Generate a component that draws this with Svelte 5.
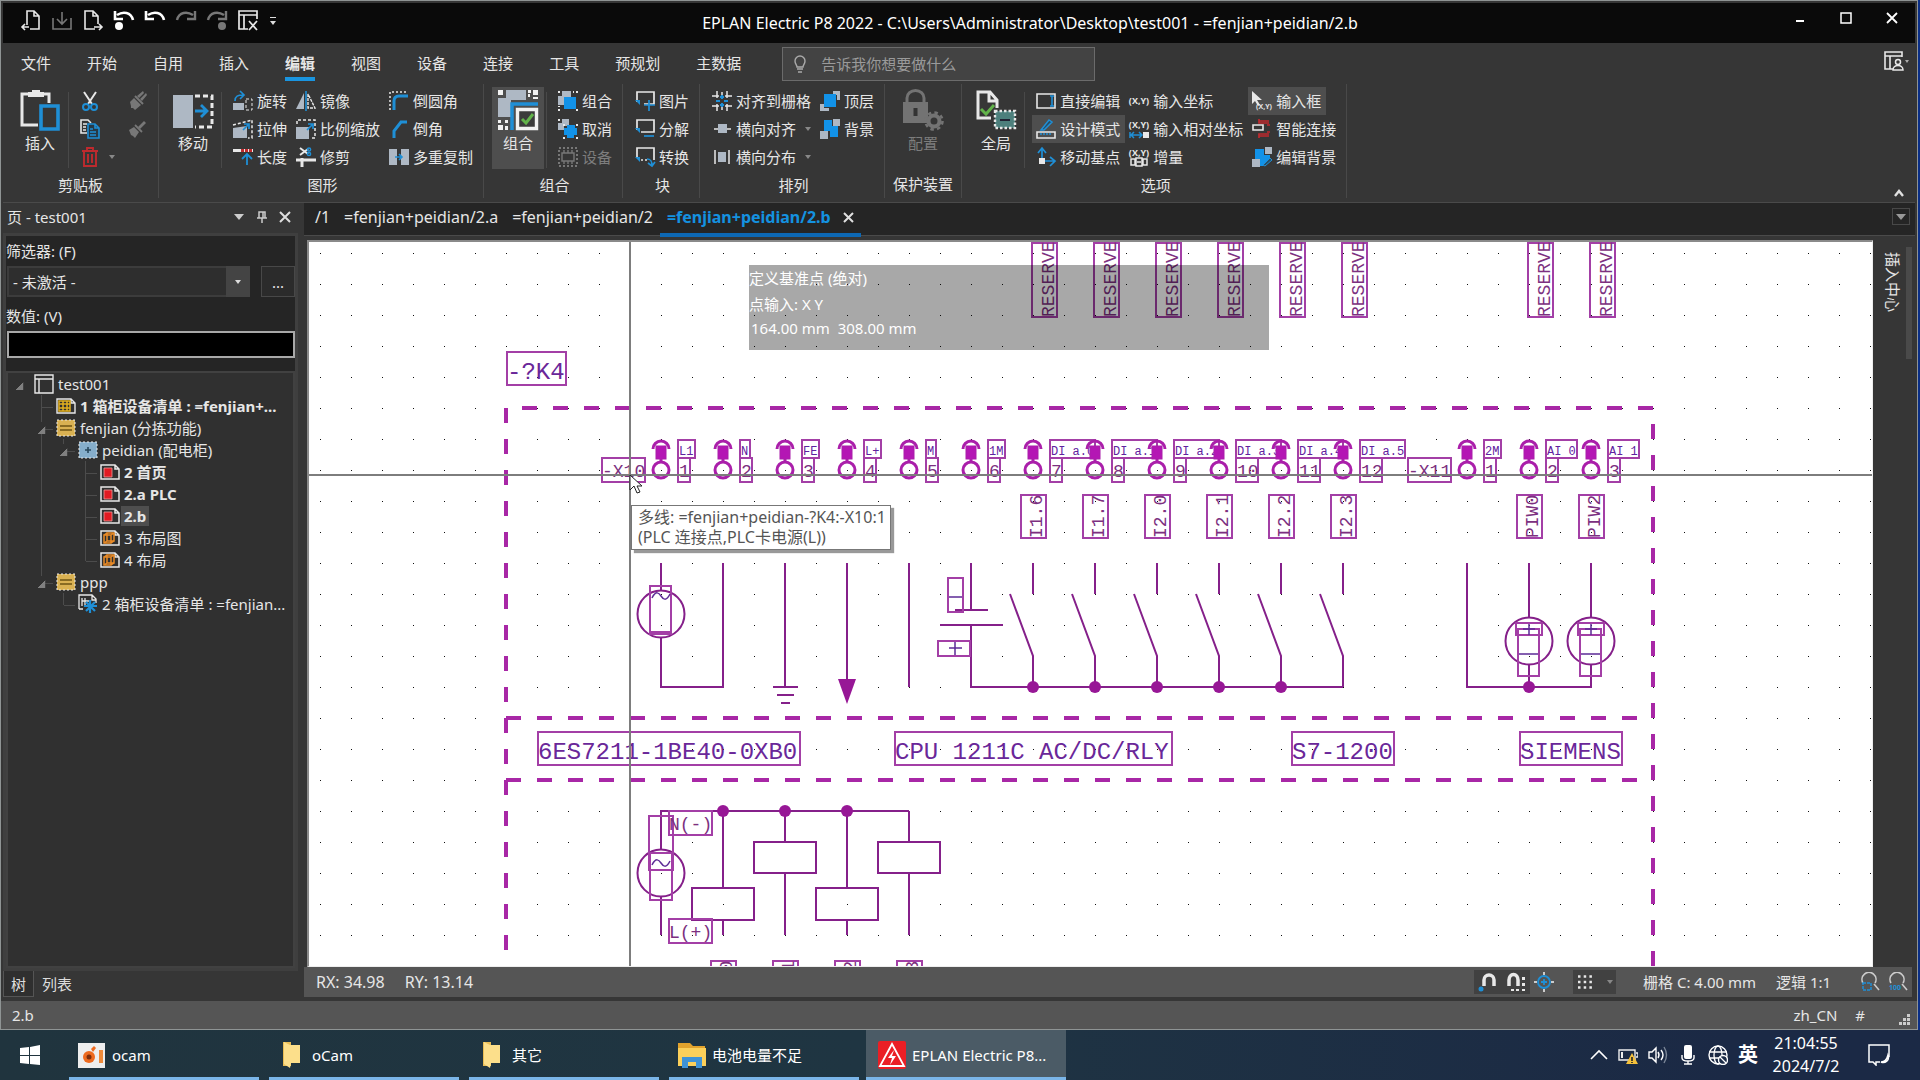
<script>
    const tabs = ['文件', '开始', '自用', '插入', '编辑', '视图', '设备', '连接', '工具', '预规划', '主数据'];
    let activeTab = $state('编辑');
    let filterValue = $state('');
    let activePage = $state('2.b');

    const W = '#e8e8e8';
    const G = '#aeb8c4';
    const B = '#1f8fd6';
    const R = '#bf2a2e';

    // 20x20 glyphs, the "big" ones are 40x40
    const icons = {
        open: `<path d="M6 15V1h7l5 5v13H9M13 1v5h5M8 17H1M4 14l-3 3 3 3" fill="none" stroke="${W}" stroke-width="1.6"/>`,
        save: `<path d="M1 8v11h18V8M10 2v12M5 9l5 5 5-5" fill="none" stroke="#777" stroke-width="1.6"/>`,
        close: `<path d="M12 19H2V1h8l5 5v8M10 1v5h5M11 17h8M16 14l3 3-3 3" fill="none" stroke="${W}" stroke-width="1.6"/>`,
        undoDot: `<path d="M3 5c6-4 14-3 16 5M1 1v8h8" fill="none" stroke="#fff" stroke-width="2.6"/><circle cx="5" cy="16" r="4" fill="#fff"/>`,
        undo: `<path d="M3 5c6-4 14-3 16 5M1 1v8h8" fill="none" stroke="#fff" stroke-width="2.6"/>`,
        redo: `<path d="M17 5C11 1 3 2 1 10M19 1v8h-8" fill="none" stroke="#777" stroke-width="2.4"/>`,
        redoDot: `<path d="M17 5C11 1 3 2 1 10M19 1v8h-8" fill="none" stroke="#777" stroke-width="2.4"/><circle cx="15" cy="16" r="4" fill="#777"/>`,
        layout: `<path d="M19 9V1H1v18h9M1 5h18M6 5v14M11 11l8 9M19 11l-8 9" fill="none" stroke="${W}" stroke-width="1.7"/>`,
        cut: `<path d="M4 1l8 12M16 1L8 13" stroke="${W}" stroke-width="2"/><circle cx="6" cy="16" r="3" fill="none" stroke="${B}" stroke-width="2"/><circle cx="14" cy="16" r="3" fill="none" stroke="${B}" stroke-width="2"/>`,
        copy: `<path d="M7 14H1V1h7l3 3M3 5h4M3 8h3M3 11h3" fill="none" stroke="${W}" stroke-width="1.6"/><path d="M8 5h7l4 4v10H8zM15 5v4h4M10 10h3M10 13h6M10 16h6" fill="#263946" stroke="${B}" stroke-width="1.6"/>`,
        trash: `<path d="M2 4h16M7 4V1h6v3M4 4v15h12V4M8 7v9M12 7v9" fill="none" stroke="${R}" stroke-width="1.9"/>`,
        brushes: `<path d="M3 11l4-4 7 7-6 5-2-2-2 0 0-2z" fill="#777"/><path d="M8 5l8 8" stroke="#777" stroke-width="2"/><path d="M10 5l6-5 1 2-5 5zM13 8l6-6 1 2-5 6z" fill="#777"/>`,
        brush: `<path d="M2 11l5-3 5 5-4 6-2-2-2-1z" fill="#777"/><path d="M8 6l7 7" stroke="#777" stroke-width="1.8"/><path d="M11 8l6-6 2 2-6 6z" fill="#777"/>`,
        rotate: `<path d="M0 12h11v7H0z" fill="${G}"/><path d="M13 8h6v11h-6z" fill="none" stroke="${W}" stroke-dasharray="3 2"/><path d="M2 10C2 5 5 4 10 4M7 0l4 4-4 4" fill="none" stroke="${B}" stroke-width="1.7"/>`,
        stretch: `<path d="M0 9l14-2v12H0z" fill="${G}"/><path d="M0 6l19-5v18h-4" fill="none" stroke="${W}" stroke-width="1.5" stroke-dasharray="3 2"/><path d="M10 11l6-6M11 5h5v5" fill="none" stroke="${B}" stroke-width="1.7"/>`,
        length: `<path d="M0 3.500h20" stroke="${W}" stroke-width="3"/><path d="M8 3.500h12" stroke="${R}" stroke-width="3" stroke-dasharray="3 1"/><path d="M14 18V7M9 12l5-5 5 5" fill="none" stroke="${B}" stroke-width="1.8"/>`,
        mirror: `<path d="M8 2v16H0z" fill="${G}"/><path d="M12 3v14h7z" fill="none" stroke="${W}" stroke-width="1.4" stroke-dasharray="3 1"/><path d="M10 0v20" stroke="${B}" stroke-width="1.6"/>`,
        scale: `<path d="M0 8h13v12H0z" fill="${G}"/><path d="M1 5V1h18v18h-4" fill="none" stroke="${W}" stroke-width="1.5" stroke-dasharray="3 2"/><path d="M11 11l6-6M12 5h5v5" fill="none" stroke="${B}" stroke-width="1.7"/>`,
        trim: `<path d="M0 13h20M6 11v9" stroke="${W}" stroke-width="3"/><path d="M4 1l8 6M4 8l8-6" stroke="${W}" stroke-width="2"/><circle cx="13" cy="2.500" r="1.600" fill="none" stroke="${B}" stroke-width="1.500"/><circle cx="13" cy="7" r="1.600" fill="none" stroke="${B}" stroke-width="1.500"/>`,
        fillet: `<path d="M1 19V1h18" fill="none" stroke="${W}" stroke-width="1.5" stroke-dasharray="2 2"/><path d="M5 19v-9c0-4 2-5 5-5h9" fill="none" stroke="${B}" stroke-width="3"/>`,
        chamfer: `<path d="M5 19v-7l7-9h6" fill="none" stroke="${B}" stroke-width="3"/>`,
        multi: `<path d="M0 2h8v16H0zM12 2h8v16h-8z" fill="${G}"/><path d="M6 10h7M10 7l3 3-3 3" fill="none" stroke="${B}" stroke-width="1.6"/>`,
        group: `<path d="M4 0h9v9H4zM0 5h6v9H0z" fill="${G}"/><path d="M6 6h12v12H6z" fill="#1292e8"/><path d="M0 0h2v2H0zM18 0h2v2h-2zM0 18h2v2H0zM18 18h2v2h-2zM15 0h1v2h-1zM0 15h2v1H0z" fill="${W}"/>`,
        ungroup: `<path d="M4 0h7v7H4zM0 4h6v7H0z" fill="${G}"/><path d="M9 6h8v3h2v7h-3v3H9v-3H6V9h3z" fill="#1292e8"/><path d="M0 0h2v2H0zM18 5h2v2h-2zM5 18h2v2H5zM18 18h2v2h-2zM5 5h2v2H5z" fill="${W}"/>`,
        device: `<path d="M1 1h18v18H1z" fill="none" stroke="#777" stroke-width="2" stroke-dasharray="2 2"/><path d="M4 6h12v8H4zM6 3v3M10 3v3M14 3v3M6 14v3M10 14v3M14 14v3" fill="none" stroke="#777" stroke-width="1.4"/>`,
        picture: `<path d="M2 11V1h17v12H9" fill="none" stroke="${W}" stroke-width="1.7"/><path d="M0 9h5v5z" fill="${B}"/><path d="M14 9v11M9 14h11" stroke="${B}" stroke-width="1.7"/>`,
        split: `<path d="M2 11V1h17v12H6" fill="none" stroke="${W}" stroke-width="1.7"/><path d="M0 9h5v5z" fill="${B}"/><path d="M9 17h10" stroke="${B}" stroke-width="1.7"/>`,
        convert: `<path d="M2 11V1h17v12M6 13h2M10 13h2" fill="none" stroke="${W}" stroke-width="1.7"/><path d="M0 10h5v5z" fill="${B}"/><path d="M12 12c4 0 5 2 5 7M13 16l4 3 3-4" fill="none" stroke="${B}" stroke-width="1.7"/>`,
        snap: `<path d="M5 0v5M10 1v3M15 0v5M5 15v5M10 16v3M15 15v5M0 5h7M0 15h7M13 5h7M13 15h7M5 13v4M15 13v4M5 3v4M15 3v4" stroke="${W}" stroke-width="1.5"/><path d="M10 4v4M8 6h4M10 12v4M8 14h4M4 10h4M12 10h4" stroke="${B}" stroke-width="2"/>`,
        alignH: `<path d="M2 10h17" stroke="${W}" stroke-width="1.5"/><path d="M6 5h9v9H6z" fill="${G}"/>`,
        spreadH: `<path d="M3 3v14M17 3v14" stroke="${W}" stroke-width="1.5"/><path d="M6 5h8v10H6z" fill="${G}"/>`,
        front: `<path d="M13 0h7v9h-3V4h-4zM0 13h4v4h5v3H0z" fill="${G}"/><path d="M4 3h12v13H4z" fill="#1292e8"/>`,
        back: `<path d="M4 1h8v6h6v11h-8v-6H4z" fill="#1292e8"/><path d="M13 0h7v7h-7zM0 12h8v8H0z" fill="${G}"/>`,
        direct: `<path d="M1 3h18v14H1z" fill="none" stroke="${W}" stroke-width="1.6"/><path d="M14 5h4M16 5v10M14 15h4" stroke="${B}" stroke-width="1.6"/>`,
        design: `<path d="M1 13h18v6H1z" fill="none" stroke="${W}" stroke-width="1.6"/><path d="M5 11L13 1l3 2-8 8zM5 14v2M8 14v2M11 14v2M14 14v2" fill="#264d66" stroke="${B}" stroke-width="1.5"/>`,
        base: `<path d="M6 14V2M2 6l4-5 4 5M6 14h12M14 10l5 4-5 5" fill="none" stroke="${B}" stroke-width="1.7"/><path d="M3 11h6v6H3z" fill="${W}"/>`,
        xy: `<text x="10" y="13" text-anchor="middle" font-family="Open Sans" font-size="9" font-weight="700" fill="${W}">(X,Y)</text>`,
        xyRel: `<text x="10" y="9" text-anchor="middle" font-family="Open Sans" font-size="9" font-weight="700" fill="${W}">(X,Y)</text><path d="M1 13v6M2 16h11M5 13l-3 3 3 3M10 13l3 3-3 3" fill="none" stroke="${B}" stroke-width="1.5"/><path d="M14 13h6v6h-6z" fill="${W}"/>`,
        increment: `<text x="10" y="9" text-anchor="middle" font-family="Open Sans" font-size="9" font-weight="700" fill="${W}">(X,Y)</text><path d="M2 12h4v6H2zM14 12h4v6h-4zM7 11h6v8H7zM8 15h4" fill="none" stroke="${W}" stroke-width="1.5"/>`,
        inputBox: `<path d="M0 0v13l3-3 3 5 2-1-3-5h5z" fill="${W}"/><text x="12" y="18" text-anchor="middle" font-family="Open Sans" font-size="7" font-weight="700" fill="${W}">(X,Y)</text>`,
        smart: `<path d="M7 0v4h10M7 2h10M7 19v-4h10M7 17h10M15 6h3M15 13h3" fill="none" stroke="${R}" stroke-width="1.7"/><path d="M1 6h10v5H1z" fill="#363636" stroke="${W}" stroke-width="1.6"/>`,
        editBack: `<path d="M3 2h9v6h6v4l-7 7H6v-7H3z" fill="#1292e8"/><path d="M13 0h7v7h-7zM0 12h8v8H0z" fill="${G}"/><path d="M11 18l7-7 2 2-7 6z" fill="#264d66" stroke="${B}"/>`,
        bigPaste: `<path d="M18 35H2V4h7M22 4h7v9" fill="none" stroke="${W}" stroke-width="3"/><path d="M8 2h4V0h8v2h4v5H8z" fill="${W}"/><path d="M21 16h17v23H21z" fill="none" stroke="${B}" stroke-width="3.600"/>`,
        bigMove: `<path d="M0 5h20v33H0z" fill="${G}"/><path d="M22 6h17v31H22" fill="none" stroke="${W}" stroke-width="3" stroke-dasharray="5 3"/><path d="M22 21h12M28 15l6 6-6 6" fill="none" stroke="${B}" stroke-width="2.800"/>`,
        bigGroup: `<path d="M8 0h20v10H13v17H0V8h8z" fill="${G}"/><path d="M14 40V14h26" fill="none" stroke="${B}" stroke-width="3.500"/><path d="M19.500 19.500h19v19h-19z" fill="#3b3b3b" stroke="#f2f2f2" stroke-width="3.400"/><path d="M24 29l4 4 7-9" fill="none" stroke="#62b34a" stroke-width="3"/><path d="M0 0h5v5H0zM35 0h5v5h-5zM0 35h5v5H0zM30 0h3v3h-3zM30 4h2v3h-2zM35 7h5v2h-5zM0 30h3v3H0zM7 30h3v3H7zM7 36h3v4H7z" fill="#f2f2f2"/>`,
        bigLock: `<path d="M0 12h25v21H0z" fill="#737373"/><path d="M4 13V8a8 7 0 0 1 17 0v5" fill="none" stroke="#737373" stroke-width="3"/><path d="M12.500 18v8" stroke="#333" stroke-width="4"/><circle cx="31" cy="31" r="5.500" fill="none" stroke="#737373" stroke-width="4"/><circle cx="31" cy="31" r="8.500" fill="none" stroke="#737373" stroke-width="2.600" stroke-dasharray="3.500 3.200"/>`,
        bigGlobal: `<path d="M15 28H2V2h12l7 8v8M13 2v9h8" fill="none" stroke="${W}" stroke-width="3"/><path d="M5 19l5 5 8-9" fill="none" stroke="#62b34a" stroke-width="3"/><path d="M19 21h20v17H19z" fill="#4d7f7c" stroke="${W}" stroke-width="2.400" stroke-dasharray="2.500 2"/><path d="M24 30h10" stroke="#223" stroke-width="2"/>`,
        project: `<path d="M1 1h18v18H1zM1 5h18M5 5v14" fill="none" stroke="${W}" stroke-width="1.4"/>`,
        list: `<path d="M1 3h14l4 4v10H1zM15 3v4h4" fill="none" stroke="${W}" stroke-width="1.4"/><path d="M3 5h11v10H3zM3 8h11M3 12h11M7 5v10M11 5v10" fill="none" stroke="#e2b01e" stroke-width="1.5"/>`,
        func: `<path d="M1 2h18v16H1z" fill="#d9b152" stroke="${W}" stroke-dasharray="2 2"/><path d="M4 8h12M4 12h12" stroke="#6e5414" stroke-width="1.5"/>`,
        place: `<path d="M1 2h18v16H1z" fill="#86aecb" stroke="${W}" stroke-dasharray="2 2"/><path d="M7 10h6M10 7v6" stroke="#29485c" stroke-width="1.6"/>`,
        page: `<path d="M1 3h14l4 4v10H1zM15 3v4h4" fill="none" stroke="${W}" stroke-width="1.5"/><path d="M4 6h8v9H4z" fill="#e11b22" stroke="#ee9a9a" stroke-width=".8"/>`,
        layoutPage: `<path d="M1 3h14l4 4v10H1zM15 3v4h4" fill="none" stroke="${W}" stroke-width="1.5"/><path d="M4 7h7v8H4zM7 5h7v8H7zM4 7l3-2M11 7l3-2M4 15l3-2M11 15l3-2" fill="none" stroke="#e98a26" stroke-width="1.5"/>`,
        report: `<path d="M1 15V1h13l4 4v4M14 1v5h4M4 4v8M7 4v8M4 7h8M1 15h4" fill="none" stroke="${W}" stroke-width="1.3"/><path d="M12 6v13M6 12h13M8 8l9 9M17 8l-9 9" stroke="${B}" stroke-width="2.200"/>`
    };

    // a button is [icon, text, state, has arrow]
    const groups = [
        { title: '剪贴板', big: ['bigPaste', '插入'], kind: 'clip', cols: [
            [['cut'], ['copy'], ['trash', '', '', true]],
            [['brushes', '', 'off'], ['brush', '', 'off']]
        ] },
        { title: '图形', big: ['bigMove', '移动'], cols: [
            [['rotate', '旋转'], ['stretch', '拉伸'], ['length', '长度']],
            [['mirror', '镜像'], ['scale', '比例缩放'], ['trim', '修剪']],
            [['fillet', '倒圆角'], ['chamfer', '倒角'], ['multi', '多重复制']]
        ] },
        { title: '组合', big: ['bigGroup', '组合', 'on'], cols: [
            [['group', '组合'], ['ungroup', '取消'], ['device', '设备', 'off']]
        ] },
        { title: '块', cols: [
            [['picture', '图片'], ['split', '分解'], ['convert', '转换']]
        ] },
        { title: '排列', cols: [
            [['snap', '对齐到栅格'], ['alignH', '横向对齐', '', true], ['spreadH', '横向分布', '', true]],
            [['front', '顶层'], ['back', '背景']]
        ] },
        { title: '保护装置', big: ['bigLock', '配置', 'off'], kind: 'guard', cols: [] },
        { title: '选项', big: ['bigGlobal', '全局'], cols: [
            [['direct', '直接编辑'], ['design', '设计模式', 'on'], ['base', '移动基点']],
            [['xy', '输入坐标'], ['xyRel', '输入相对坐标'], ['increment', '增量']],
            [['inputBox', '输入框', 'on'], ['smart', '智能连接'], ['editBack', '编辑背景']]
        ] }
    ];

    const tree = [
        { icon: 'project', text: 'test001', children: [
            { icon: 'list', text: '1 箱柜设备清单 : =fenjian+...', bold: true },
            { icon: 'func', text: 'fenjian (分拣功能)', children: [
                { icon: 'place', text: 'peidian (配电柜)', children: [
                    { icon: 'page', text: '2 首页', bold: true },
                    { icon: 'page', text: '2.a PLC', bold: true },
                    { icon: 'page', text: '2.b', bold: true },
                    { icon: 'layoutPage', text: '3 布局图' },
                    { icon: 'layoutPage', text: '4 布局' }
                ] }
            ] },
            { icon: 'func', text: 'ppp', children: [
                { icon: 'report', text: '2 箱柜设备清单 : =fenjian...' }
            ] }
        ] }
    ];

    const docs = ['/1', '=fenjian+peidian/2.a', '=fenjian+peidian/2', '=fenjian+peidian/2.b'];

    const tasks = [
        { icon: 'ocam', text: 'ocam' },
        { icon: 'folder', text: 'oCam' },
        { icon: 'folder', text: '其它' },
        { icon: 'explorer', text: '电池电量不足' },
        { icon: 'eplan', text: 'EPLAN Electric P8...', active: true }
    ];

    const taskIcons = {
        ocam: `<path d="M0 2h27v25H0z" fill="#eee"/><circle cx="11" cy="16" r="6" fill="#ee6a1f"/><circle cx="11" cy="16" r="2.500" fill="#7c2d0c"/><path d="M13 8l3-3 2 2-3 4z" fill="#ee6a1f"/><path d="M21 9h4v13h-4z" fill="#f08b3a"/>`,
        folder: `<path d="M5 1h8v24H5z" fill="#e9bd55"/><path d="M12 4h10v18h-9l-1 5-6-4V1z" fill="#fcdf8b"/>`,
        explorer: `<path d="M0 2h12l3 3h12v20H0z" fill="#e2a32d"/><path d="M0 7h28v18H0z" fill="#fbd05a"/><path d="M4 27V16h20v11h-6v-6h-8v6z" fill="#3f93d6"/>`,
        eplan: `<rect width="28" height="28" rx="2" fill="#ea1f25"/><path d="M14 3L2 25h24z" fill="none" stroke="#fff" stroke-width="1.800"/><path d="M16 9l-6 8h4l-2 7 6-9h-4z" fill="#fff"/>`
    };

    // sheet coordinates: the grid pitch is 31, pins sit on odd columns
    const pitch = 31;
    const col = (n) => n * pitch;

    const pins = [
        [11, 'L1', '1'], [13, 'N', '2'], [15, 'FE', '3'], [17, 'L+', '4'], [19, 'M', '5'], [21, '1M', '6'],
        [23, 'DI a.0', '7'], [25, 'DI a.1', '8'], [27, 'DI a.2', '9'], [29, 'DI a.3', '10'], [31, 'DI a.4', '11'],
        [33, 'DI a.5', '12'], [37, '2M', '1'], [39, 'AI 0', '2'], [41, 'AI 1', '3']
    ];
    const reserve = [23, 25, 27, 29, 31, 33, 39, 41];
    const addresses = [
        [23, 'I1.6', 242], [25, 'I1.7', 242], [27, 'I2.0', 242], [29, 'I2.1', 242], [31, 'I2.2', 242], [33, 'I2.3', 242],
        [39, 'PIW0', 242], [41, 'PIW2', 242],
        [13, 'Q0.0', 708], [15, 'Q0.1', 708], [17, 'Q0.2', 708], [19, 'Q0.3', 708]
    ];
    const titles = [
        [187, 99, 59, '-?K4'], [218, 479, 262, '6ES7211-1BE40-0XB0'], [575, 479, 277, 'CPU 1211C AC/DC/RLY'],
        [972, 479, 102, 'S7-1200'], [1200, 479, 102, 'SIEMENS']
    ];
    const notes = [[282, 205, '-X10'], [1088, 205, '-X11'], [349, 558, 'N(-)'], [349, 666, 'L(+)']];
    const dots = [[23, 14], [25, 14], [27, 14], [29, 14], [31, 14], [39, 14], [13, 18], [15, 18], [17, 18]];
</script>

{#snippet icon(name, size = 20)}
    <svg class="icon" width={size} height={size} viewBox="0 0 {size} {size}" aria-hidden="true">{@html icons[name]}</svg>
{/snippet}

{#snippet branch(nodes)}
    <ul>
        {#each nodes as node}
            <li>
                <div class="node">
                    <span class="twisty">{#if node.children}<i></i>{/if}</span>
                    {@render icon(node.icon)}
                    <button class:bold={node.bold} class:selected={node.text === activePage} onclick={() => (activePage = node.text)}>{node.text}</button>
                </div>
                {#if node.children}{@render branch(node.children)}{/if}
            </li>
        {/each}
    </ul>
{/snippet}

<div class="screen">
    <div class="window">
        <header class="titlebar">
            <div class="quick">
                {#each ['open', 'save', 'close', 'undoDot', 'undo', 'redo', 'redoDot', 'layout'] as name}
                    <button aria-label={name}>{@render icon(name)}</button>
                {/each}
                <button class="more" aria-label="more"><svg width="8" height="10" viewBox="0 0 8 10"><path d="M1 0h6v1H1zM1 4h6L4 8z" fill="#ddd" /></svg></button>
            </div>
            <h1>EPLAN Electric P8 2022 - C:\Users\Administrator\Desktop\test001 - =fenjian+peidian/2.b</h1>
            <div class="controls">
                <button aria-label="minimize"><svg width="12" height="12"><path d="M2 9h8" stroke="#fff" stroke-width="2" /></svg></button>
                <button aria-label="maximize"><svg width="12" height="12"><path d="M1 1h10v10H1z" fill="none" stroke="#fff" stroke-width="1.500" /></svg></button>
                <button aria-label="close"><svg width="12" height="12"><path d="M1 1l10 10M11 1L1 11" stroke="#fff" stroke-width="1.800" /></svg></button>
            </div>
        </header>

        <nav class="menu">
            {#each tabs as tab}
                <button class:active={tab === activeTab} onclick={() => (activeTab = tab)}><span>{tab}</span></button>
            {/each}
            <label class="tell">
                <svg width="14" height="18" viewBox="0 0 14 18"><path d="M4 12c0-2-2-3-2-6a5 5 0 0 1 10 0c0 3-2 4-2 6zM4 14h6M5 17h4" fill="none" stroke="#aaa" stroke-width="1.400" /></svg>
                <input type="text" placeholder="告诉我你想要做什么" aria-label="告诉我你想要做什么" />
            </label>
            <button class="view" aria-label="layout">
                <svg width="26" height="20" viewBox="0 0 26 20"><path d="M9 18H1V1h17v5M1 5h17M6 5v13" fill="none" stroke="#e8e8e8" stroke-width="1.600" /><circle cx="14" cy="11" r="2.500" fill="none" stroke="#e8e8e8" stroke-width="1.500" /><path d="M9 19c0-6 10-6 10 0z" fill="none" stroke="#e8e8e8" stroke-width="1.500" /><path d="M21 9h4l-2 3z" fill="#aaa" /></svg>
            </button>
        </nav>

        <div class="ribbon">
            {#each groups as group}
                <section class={group.kind}>
                    <div class="tools">
                        {#if group.big}
                            <button class="big {group.big[2] ?? ''}">{@render icon(group.big[0], 40)}<span>{group.big[1]}</span></button>
                        {/if}
                        {#if group.big && group.cols.length}<span class="rule"></span>{/if}
                        {#each group.cols as column}
                            <div class="column">
                                {#each column as item}
                                    <button class="small {item[2] ?? ''}" aria-label={item[1] || item[0]}>
                                        {@render icon(item[0])}
                                        {#if item[1]}<span>{item[1]}</span>{/if}
                                        {#if item[3]}<i class="caret"></i>{/if}
                                    </button>
                                {/each}
                            </div>
                        {/each}
                    </div>
                    <h2>{group.title}</h2>
                </section>
            {/each}
            <button class="collapse" aria-label="collapse"><svg width="10" height="8"><path d="M1 7l4-5 4 5" fill="none" stroke="#e0e0e0" stroke-width="2.400" /></svg></button>
        </div>

        <main>
            <aside class="pages">
                <div class="dock-title">
                    <span>页 - test001</span>
                    <button aria-label="menu"><svg width="12" height="12"><path d="M1 3h10L6 9z" fill="#ccc" /></svg></button>
                    <button aria-label="pin"><svg width="12" height="12"><path d="M3 1h6v6H3zM7 1v6M1 7h10M6 7v5" fill="none" stroke="#ccc" stroke-width="1.500" /></svg></button>
                    <button aria-label="close"><svg width="12" height="12"><path d="M1 1l10 10M11 1L1 11" stroke="#ddd" stroke-width="2" /></svg></button>
                </div>
                <div class="dock-body">
                    <label for="filter">筛选器: (F)</label>
                    <div class="filter">
                        <div class="combo">
                            <select id="filter"><option>- 未激活 -</option></select>
                            <span class="drop"><i></i></span>
                        </div>
                        <button>...</button>
                    </div>
                    <label for="value">数值: (V)</label>
                    <input id="value" type="text" bind:value={filterValue} />
                    <div class="tree">{@render branch(tree)}</div>
                </div>
                <div class="dock-tabs">
                    <button class="active">树</button>
                    <button>列表</button>
                </div>
            </aside>

            <div class="work">
                <div class="docs">
                    {#each docs as doc, i}
                        <button class:active={i === 3}>{doc}{#if i === 3}<svg width="11" height="11"><path d="M1 1l9 9M10 1l-9 9" stroke="#e0e0e0" stroke-width="2" /></svg>{/if}</button>
                    {/each}
                    <button class="list" aria-label="list"><svg width="12" height="8"><path d="M1 1h10L6 7z" fill="#999" /></svg></button>
                </div>

                <div class="middle">
                    <div class="sheet">
                        <svg class="drawing" width="100%" height="100%">
                            <defs>
                                <pattern id="grid" x="11" y="11" width={pitch} height={pitch} patternUnits="userSpaceOnUse">
                                    <rect width="1" height="1" fill="#111" />
                                </pattern>
                            </defs>
                            <rect width="100%" height="100%" fill="url(#grid)" />
                            <g transform="translate(11 11)">
                                <g class="outline">
                                    <path d="M186 155V720" />
                                    <path d="M186 155H1333M1333 155V720" stroke-dashoffset="15" />
                                    <path d="M186 465H1320M186 527H1320" />
                                </g>

                                <g class="wire">
                                    <path d="M341 310V337M341 384V434H403V310" />
                                    <circle cx="341" cy="361" r="23.500" />
                                    <path d="M465 310V434M453 434h25M457 442h17M461 450h9" />
                                    <path d="M527 310V430M589 310V434" />
                                    <path d="M651 310V357M635 357h33M620 372h63M651 372V434H1023" />
                                    {#each [23, 25, 27, 29, 31, 33] as n}
                                        <path d="M{col(n)} 310v31M{col(n) - 23} 341L{col(n)} 403V434" />
                                    {/each}
                                    <path d="M1147 310V434H1271V411" />
                                    {#each [39, 41] as n}
                                        <path d="M{col(n)} 310V364M{col(n)} 411V434" />
                                        <circle cx={col(n)} cy="388" r="23.500" />
                                    {/each}
                                    <path d="M341 597V558H589M341 644V682" />
                                    <circle cx="341" cy="620" r="23.500" />
                                    {#each [13, 17] as n}
                                        <path d="M{col(n)} 558V635M{col(n)} 667V682" />
                                        <rect x={col(n) - 31} y="635" width="62" height="32" />
                                    {/each}
                                    {#each [15, 19] as n}
                                        <path d="M{col(n)} 558V589M{col(n)} 620V682" />
                                        <rect x={col(n) - 31} y="589" width="62" height="31" />
                                    {/each}
                                </g>

                                <path class="solid" d="M518 426h18l-9 25z" />
                                {#each dots as [n, row]}
                                    <circle class="solid" cx={col(n)} cy={col(row)} r="6" />
                                {/each}

                                <g class="frame">
                                    <path d="M330 333h21v48h-21zM330 379h21" />
                                    <path d="M329 563h24v54h-24zM330 600h22v47h-22z" />
                                    <path d="M628 325h15v34h-15zM618 388h32v15h-32z" />
                                    {#each [39, 41] as n}
                                        <path d="M{col(n) - 13} 370h26v12h-26zM{col(n) - 11} 376h21v47h-21z" />
                                    {/each}
                                </g>
                                <g class="mark">
                                    <path d="M332 345c4-8 7-5 9-2s5 6 9-2" />
                                    <path d="M332 612c4-8 7-5 9-2s5 6 9-2" />
                                    <path d="M629 344h13M629 395h13M635 389v13" />
                                    {#each [39, 41] as n}
                                        <path d="M{col(n) - 6} 376h12M{col(n)} 371v11M{col(n) - 10} 401h19" />
                                    {/each}
                                </g>

                                {#each titles as [x, y, width, text]}
                                    <g class="frame"><rect {x} {y} {width} height="33" /></g>
                                    <text class="title" {x} y={y + 27}>{text}</text>
                                {/each}
                                {#each notes as [x, y, text]}
                                    <g class="frame"><rect {x} {y} width="43" height="24" /></g>
                                    <text class="note" {x} y={y + 19}>{text}</text>
                                {/each}
                                {#each reserve as n}
                                    <g class="frame"><rect x={col(n) - 1} y="-10" width="25" height="74" /></g>
                                    <text class="note" transform="translate({col(n) + 21} 64) rotate(-90)">RESERVE</text>
                                {/each}
                                {#each addresses as [n, text, y]}
                                    <g class="frame"><rect x={col(n) - 12} {y} width="25" height="43" /></g>
                                    <text class="note" transform="translate({col(n) + 9} {y + 43}) rotate(-90)">{text}</text>
                                {/each}

                                {#each pins as [n, name, no]}
                                    <g class="frame">
                                        <rect x={col(n) + 17} y="187" width={name.length * 7 + 3} height="18" />
                                        <rect x={col(n) + 17} y="205" width={no.length * 10 + 2} height="24" />
                                    </g>
                                    <text class="pin-name" x={col(n) + 18} y="202">{name}</text>
                                    <text class="pin-no" x={col(n) + 18} y="224">{no}</text>
                                {/each}
                                {#each pins as [n]}
                                    <g class="pin" transform="translate({col(n)} 0)">
                                        <path d="M-8 196a8 8 0 0 1 16 0" />
                                        <rect x="-5" y="193" width="10" height="13" />
                                        <path d="M0 206v4" />
                                        <circle cx="0" cy="217" r="8" />
                                    </g>
                                {/each}
                            </g>
                            <path class="cross" d="M0 233H5000M321 0V5000" />
                        </svg>

                        <div class="prompt">
                            <p>定义基准点 (绝对)</p>
                            <p>点输入: X Y</p>
                            <p class="point">164.00 mm&nbsp; 308.00 mm</p>
                        </div>
                        <svg class="cursor" width="14" height="20"><path d="M1 1v15l4-4 3 7 3-1-3-6h5z" fill="#fff" stroke="#222" /></svg>
                        <div class="tip">多线: =fenjian+peidian-?K4:-X10:1<br />(PLC 连接点,PLC卡电源(L))</div>
                    </div>
                    <div class="side">
                        <button>插入中心</button>
                        <span></span>
                    </div>
                </div>

                <div class="strip">
                    <span class="coord">RX: 34.98</span>
                    <span class="coord">RY: 13.14</span>
                    <div class="toggles">
                        <button class="on" aria-label="snap"><svg width="20" height="20"><path d="M6 14V8a5 5 0 0 1 10 0v6" fill="none" stroke="#e8e8e8" stroke-width="3.500" /><circle cx="3" cy="17" r="2.500" fill="#1f8fd6" /></svg></button>
                        <button class="on" aria-label="grid snap"><svg width="20" height="20"><path d="M3 14V8a4 5 0 0 1 9 0v6" fill="none" stroke="#e8e8e8" stroke-width="3.500" /><path d="M16 5h3v3h-3zM16 11h3v3h-3zM16 17h3v2h-3zM10 17h3v2h-3zM5 17h3v2H5z" fill="#e8e8e8" /></svg></button>
                        <button aria-label="object snap"><svg width="20" height="20"><circle cx="10" cy="10" r="6" fill="none" stroke="#1f8fd6" stroke-width="1.800" /><path d="M7 10h6M10 7v6" stroke="#1f8fd6" stroke-width="1.800" /><path d="M10 0v3M10 17v3M0 10h3M17 10h3" stroke="#ccc" stroke-width="2" /></svg></button>
                    </div>
                    <button class="on grid" aria-label="grid"><svg width="16" height="16"><path d="M1 2.500h14M1 8h14M1 13.500h14" stroke="#e8e8e8" stroke-width="2.400" stroke-dasharray="2.500 3.200" /></svg><i class="caret"></i></button>
                    <span class="size">栅格 C: 4.00 mm</span>
                    <span class="scale">逻辑 1:1</span>
                    <button aria-label="zoom window"><svg width="20" height="20"><path d="M3 11A7 7 0 1 1 15 11M14 12l5 6" fill="none" stroke="#ccc" stroke-width="1.600" /><path d="M3 11h8v7H3z" fill="none" stroke="#1f8fd6" stroke-width="1.500" stroke-dasharray="3 1" /></svg></button>
                    <button aria-label="zoom 100"><svg width="20" height="20"><path d="M3 11A7 7 0 1 1 15 11M14 12l5 6" fill="none" stroke="#ccc" stroke-width="1.600" /><text x="1" y="18" font-family="Noto Sans" font-size="7" font-weight="700" fill="#1f8fd6">100</text></svg></button>
                </div>
            </div>
        </main>

        <footer class="status">
            <span>2.b</span>
            <span class="lang">zh_CN</span>
            <span>#</span>
            <svg width="12" height="12"><path d="M8 0h3v3H8zM4 4h3v3H4zM8 4h3v3H8zM0 8h3v3H0zM4 8h3v3H4zM8 8h3v3H8z" fill="#ccc" /></svg>
        </footer>
    </div>

    <div class="taskbar">
        <button class="start" aria-label="start"><svg width="20" height="20"><path d="M0 3l9-1v8H0zM10 2l10-2v10H10zM0 11h9v8l-9-1zM10 11h10v9l-10-1z" fill="#fff" /></svg></button>
        {#each tasks as task}
            <button class="task" class:active={task.active}>
                <svg width="28" height="28" aria-hidden="true">{@html taskIcons[task.icon]}</svg><span>{task.text}</span>
            </button>
        {/each}
        <div class="tray">
            <svg width="18" height="20"><path d="M1 14l8-8 8 8" fill="none" stroke="#fff" stroke-width="1.600" /></svg>
            <svg width="20" height="20"><path d="M1 5h16v10H1zM18 8h2v4h-2" fill="none" stroke="#eee" stroke-width="1.400" /><path d="M3 7h2v6H3z" fill="#eee" /><path d="M14 8l6 11H8z" fill="#f5c13c" /><path d="M14 12v4M14 17v1" stroke="#222" stroke-width="1.600" /></svg>
            <svg width="20" height="20"><path d="M1 7h3l4-4v14l-4-4H1zM10 7q2 3 0 6M13 5q4 5 0 10" fill="none" stroke="#fff" stroke-width="1.400" /><path d="M16 2q5 8 0 16" fill="none" stroke="#7c8798" stroke-width="1.400" /></svg>
            <svg width="20" height="20"><rect x="6" y="0" width="8" height="14" rx="2" fill="#fff" /><path d="M4 10v3q0 3 6 3t6-3v-3M10 16v3M6 19h8" fill="none" stroke="#fff" stroke-width="1.400" /></svg>
            <svg width="20" height="20"><circle cx="10" cy="10" r="9" fill="none" stroke="#fff" stroke-width="1.400" /><ellipse cx="10" cy="10" rx="4" ry="9" fill="none" stroke="#fff" stroke-width="1.300" /><path d="M1 7h18M1 13h18" stroke="#fff" stroke-width="1.300" /><circle cx="15" cy="15" r="4.500" fill="#1c2c47" stroke="#fff" stroke-width="1.400" /><path d="M12 12l6 6" stroke="#fff" stroke-width="1.300" /></svg>
            <span class="ime">英</span>
            <div class="clock">21:04:55<br />2024/7/2</div>
            <svg class="notify" width="22" height="22"><path d="M12 18H8v3l-3-3H1V1h20v12" fill="none" stroke="#fff" stroke-width="1.500" /><path d="M20 11c2 5-3 9-7 7 4 0 6-3 7-7z" fill="none" stroke="#fff" stroke-width="1.500" /></svg>
        </div>
    </div>
</div>

<style>
    :global(body) {
        background: #0a2e86;
    }

    .screen {
        display: flex;
        flex-direction: column;
        height: 100vh;
        font-family: 'Noto Sans', 'Noto Sans CJK SC', sans-serif;
        font-size: 15px;
        line-height: 20px;
        color: #e6e6e6;
    }

    button, input, select {
        font: inherit;
        color: inherit;
        border: 0;
        padding: 0;
        margin: 0;
        background: none;
        box-sizing: border-box;
    }

    button {
        display: flex;
        align-items: center;
        justify-content: center;
        white-space: nowrap;
    }

    svg {
        display: block;
        flex: none;
    }

    .icon {
        overflow: visible;
    }

    h1, h2, p, ul {
        margin: 0;
        padding: 0;
        font-size: 15px;
        font-weight: 400;
    }

    .window {
        flex: 1;
        min-height: 0;
        display: flex;
        flex-direction: column;
        margin-right: 2px;
        border: 1px solid #8f9494;
        background: #363636;
    }

    .titlebar {
        display: flex;
        height: 40px;
        margin: 2px 2px 0;
        background: #0a0a0a;
        color: #fff;
    }

    .quick {
        display: flex;
        gap: 11px;
        width: 262px;
        padding: 7px 0 0 18px;
        align-items: flex-start;
    }

    .quick .more {
        margin-top: 7px;
    }

    h1 {
        flex: 1;
        font-size: 16px;
        text-align: center;
        line-height: 40px;
        white-space: nowrap;
    }

    .controls {
        display: flex;
        height: 30px;
    }

    .controls button {
        width: 46px;
    }

    .menu {
        display: flex;
        height: 41px;
        flex: none;
        margin: 0 2px;
    }

    .menu > button {
        padding: 0 18px;
        align-items: flex-start;
    }

    .menu span {
        padding-top: 10px;
        height: 24px;
        border-bottom: 4px solid transparent;
    }

    .menu .active span {
        border-color: #1a95e0;
        font-weight: 700;
    }

    .tell {
        display: flex;
        align-items: center;
        gap: 14px;
        width: 313px;
        height: 34px;
        margin: 4px 0 0 23px;
        padding-left: 10px;
        box-sizing: border-box;
        border: 1px solid #6b6b6b;
        background: #434343;
    }

    .tell input {
        flex: 1;
        min-width: 0;
        outline: 0;
    }

    .tell input::placeholder {
        color: #9a9a9a;
        opacity: 1;
    }

    .menu .view {
        margin-left: auto;
        padding: 8px 5px 0;
    }

    .ribbon {
        display: flex;
        flex: none;
        height: 118px;
        margin: 0 2px;
        border-bottom: 1px solid #4a4a4a;
    }

    .ribbon section {
        display: flex;
        flex-direction: column;
        padding: 3px 5px 0 8px;
        margin-bottom: 4px;
        border-right: 1px solid #494949;
    }

    .ribbon .clip {
        padding: 3px 11px 0;
    }

    .ribbon .guard {
        padding: 3px 8px 0;
    }

    .tools {
        display: flex;
        justify-content: center;
        height: 84px;
    }

    h2 {
        text-align: center;
        line-height: 28px;
    }

    .big {
        flex-direction: column;
        justify-content: flex-start;
        gap: 3px;
        width: 52px;
        height: 82px;
        padding-top: 3px;
    }

    .rule {
        width: 1px;
        height: 76px;
        margin: 5px 7px 0 2px;
        background: #494949;
    }

    .small {
        height: 28px;
        gap: 4px;
        padding: 0 5px 0 4px;
    }

    .clip .small {
        padding-right: 0;
    }

    .clip .column {
        min-width: 36px;
    }

    .clip .column + .column {
        min-width: 24px;
        margin-left: 8px;
    }

    .big.on, .small.on {
        background: #4e4e4e;
    }

    .big.off, .small.off {
        color: #7d7d7d;
    }

    .caret {
        margin-left: 5px;
        border: 3px solid transparent;
        border-top: 4px solid #888;
        border-bottom: 0;
    }

    .collapse {
        margin: 104px 11px 0 auto;
        height: 10px;
    }

    main {
        flex: 1;
        min-height: 0;
        display: flex;
        gap: 6px;
        padding: 0 2px 4px;
    }

    .pages {
        width: 295px;
        flex: none;
        display: flex;
        flex-direction: column;
    }

    .dock-title {
        display: flex;
        gap: 11px;
        height: 28px;
        align-items: center;
        padding: 0 7px 2px 4px;
    }

    .dock-title span {
        flex: 1;
    }

    .dock-body {
        flex: 1;
        min-height: 0;
        display: flex;
        flex-direction: column;
        border: 3px solid #3f3f3f;
        background: #252525;
    }

    .dock-body > label {
        height: 30px;
        line-height: 30px;
    }

    .dock-body > label + input {
        margin: 2px 0 13px 1px;
        height: 27px;
        border: 2px solid #a8a8a8;
        background: #000;
    }

    .dock-body > .filter + label {
        height: 32px;
        line-height: 38px;
    }

    .filter {
        display: flex;
        gap: 11px;
        height: 31px;
        margin-left: 1px;
    }

    .filter > button {
        width: 34px;
        border: 1px solid #484848;
        background: #2b2b2b;
    }

    .combo {
        position: relative;
        flex: 1;
    }

    .combo select {
        width: 100%;
        height: 31px;
        appearance: none;
        padding-left: 4px;
        border: 2px solid #3c3c3c;
        background: #2e2e2e;
    }

    .drop {
        position: absolute;
        right: 0;
        top: 0;
        width: 24px;
        height: 31px;
        display: flex;
        align-items: center;
        justify-content: center;
        background: #444;
        pointer-events: none;
    }

    .drop i {
        border: 3px solid transparent;
        border-top: 4px solid #ddd;
        border-bottom: 0;
    }

    .tree {
        flex: 1;
        min-height: 0;
        overflow: hidden;
        border: 2px solid #414141;
        background: #303030;
    }

    ul {
        list-style: none;
    }

    li {
        position: relative;
    }

    .tree li ul {
        padding-left: 22px;
    }

    .tree li li::before {
        content: '';
        position: absolute;
        left: 11px;
        top: 0;
        bottom: 0;
        border-left: 1px solid #4c4c4c;
    }

    .tree li li:last-child::before {
        bottom: auto;
        height: 12px;
    }

    .node {
        position: relative;
        display: flex;
        align-items: center;
        height: 22px;
        padding-left: 4px;
    }

    .tree li li > .node::before {
        content: '';
        position: absolute;
        left: 12px;
        top: 12px;
        width: 11px;
        border-top: 1px solid #4c4c4c;
    }

    .twisty {
        width: 22px;
        z-index: 1;
    }

    .twisty i {
        display: block;
        width: 14px;
        height: 12px;
        background: linear-gradient(135deg, #303030 60%, #808080 60%);
        clip-path: polygon(0 0, 80% 0, 80% 100%, 0 100%);
    }

    .node button {
        height: 20px;
        padding: 0 3px;
        margin-left: 1px;
    }

    .node .bold {
        font-weight: 700;
    }

    .node .selected {
        background: #4e4e4e;
    }

    .dock-tabs {
        display: flex;
        height: 26px;
    }

    .dock-tabs button {
        padding: 0 8px;
        color: #ddd;
    }

    .dock-tabs .active {
        padding: 0 7px;
        border: 1px solid #555;
        border-top: 0;
        background: #2f2f2f;
    }

    .work {
        flex: 1;
        min-width: 0;
        display: flex;
        flex-direction: column;
    }

    .docs {
        display: flex;
        height: 32px;
        flex: none;
        padding-left: 4px;
        font-size: 16px;
        border-bottom: 1px solid #4a4a4a;
        background: #252525;
    }

    .docs button {
        position: relative;
        padding: 0 7px 4px;
    }

    .docs .active {
        gap: 12px;
        color: #1492e0;
        font-weight: 700;
    }

    .docs .active::after {
        content: '';
        position: absolute;
        left: 0;
        right: 0;
        bottom: -2px;
        height: 4px;
        background: #0d68b4;
    }

    .docs .list {
        margin: 5px 5px 0 auto;
        padding: 0 2px;
        height: 17px;
        border: 1px solid #484848;
    }

    .middle {
        flex: 1;
        min-height: 0;
        display: flex;
        padding: 4px 0 0 3px;
    }

    .sheet {
        position: relative;
        flex: 1;
        min-width: 0;
        overflow: hidden;
        border: 2px solid #8a8a8a;
        border-right: 1px solid #eee;
        border-bottom: 1px solid #eee;
        background: #fff;
    }

    .drawing {
        position: absolute;
        inset: 0;
    }

    .outline {
        fill: none;
        stroke: #a827a6;
        stroke-width: 4;
        stroke-dasharray: 15 16;
    }

    .wire {
        fill: none;
        stroke: #85208a;
        stroke-width: 2;
    }

    .solid {
        fill: #971796;
    }

    .frame {
        fill: none;
        stroke: #a33fa6;
        stroke-width: 2;
    }

    .mark {
        fill: none;
        stroke: #5c2b96;
        stroke-width: 1.5;
    }

    .drawing text {
        font-family: 'Liberation Mono', monospace;
        white-space: pre;
    }

    .drawing .title {
        font-size: 24px;
        fill: #6a2799;
    }

    .drawing .note, .drawing .pin-no {
        font-size: 18px;
        fill: #7c3080;
    }

    .drawing .pin-name {
        font-size: 12px;
        fill: #5f22a0;
    }

    .pin {
        fill: none;
        stroke: #aa1faa;
        stroke-width: 3;
    }

    .pin rect {
        fill: #b416b4;
        stroke-width: 1;
    }

    .cross {
        stroke: #7d7d7d;
        stroke-width: 2;
    }

    .prompt {
        position: absolute;
        left: 440px;
        top: 23px;
        width: 520px;
        height: 85px;
        background: rgba(0, 0, 0, 0.34);
        color: #fff;
    }

    .prompt p {
        line-height: 26px;
    }

    .prompt .point {
        padding-left: 2px;
        line-height: 22px;
    }

    .cursor {
        position: absolute;
        left: 320px;
        top: 232px;
    }

    .tip {
        position: absolute;
        left: 322px;
        top: 263px;
        padding: 1px 4px 2px 6px;
        border: 1px solid #777;
        background: #fff;
        color: #555;
        font-size: 16px;
        box-shadow: 3px 3px 1px rgba(0, 0, 0, 0.4);
        white-space: nowrap;
    }

    .side {
        display: flex;
        justify-content: flex-end;
        flex: none;
        width: 39px;
        padding: 7px 3px 0 0;
        gap: 3px;
    }

    .side button {
        writing-mode: vertical-rl;
        text-orientation: sideways;
        height: 70px;
    }

    .side span {
        width: 6px;
        height: 112px;
        background: #4a4a4a;
    }

    .strip {
        display: flex;
        align-items: center;
        flex: none;
        height: 30px;
        margin: 0 3px 0 0;
        padding-left: 3px;
        background: #555;
    }

    .strip .coord {
        padding: 0 11px 0 9px;
        font-size: 16px;
    }

    .toggles {
        display: flex;
        margin-left: auto;
    }

    .strip button {
        width: 28px;
        height: 24px;
    }

    .strip .on {
        background: #414141;
    }

    .strip .grid {
        width: 43px;
        gap: 9px;
        margin: 0 27px 0 15px;
    }

    .size {
        width: 114px;
        white-space: nowrap;
    }

    .scale {
        margin: 0 24px 0 19px;
        width: 56px;
        white-space: nowrap;
    }

    .status {
        display: flex;
        align-items: center;
        flex: none;
        height: 28px;
        padding: 0 6px 0 11px;
        background: #555;
    }

    .lang {
        margin: 0 18px 0 auto;
    }

    .status svg {
        margin: 10px 0 0 34px;
    }

    .taskbar {
        display: flex;
        flex: none;
        height: 50px;
        background: linear-gradient(90deg, #20343e, #1f3542 45%, #1b2945 90%);
        color: #fff;
    }

    .start {
        width: 60px;
        margin-right: 6px;
    }

    .task {
        position: relative;
        width: 200px;
        padding: 0 8px 0 12px;
        gap: 6px;
        justify-content: flex-start;
        background: linear-gradient(#7ab5e8, #7ab5e8) 3px 100% / 190px 3px no-repeat;
    }

    .task.active {
        background: linear-gradient(#7ab5e8, #7ab5e8) 0 100% / 100% 3px no-repeat #4b5b66;
    }

    .tray {
        display: flex;
        align-items: center;
        gap: 10px;
        margin-left: auto;
        padding-right: 30px;
    }

    .ime {
        font-size: 20px;
        font-weight: 700;
    }

    .clock {
        width: 76px;
        font-size: 16px;
        line-height: 23px;
        text-align: center;
    }

    .notify {
        margin-left: 14px;
    }
</style>
